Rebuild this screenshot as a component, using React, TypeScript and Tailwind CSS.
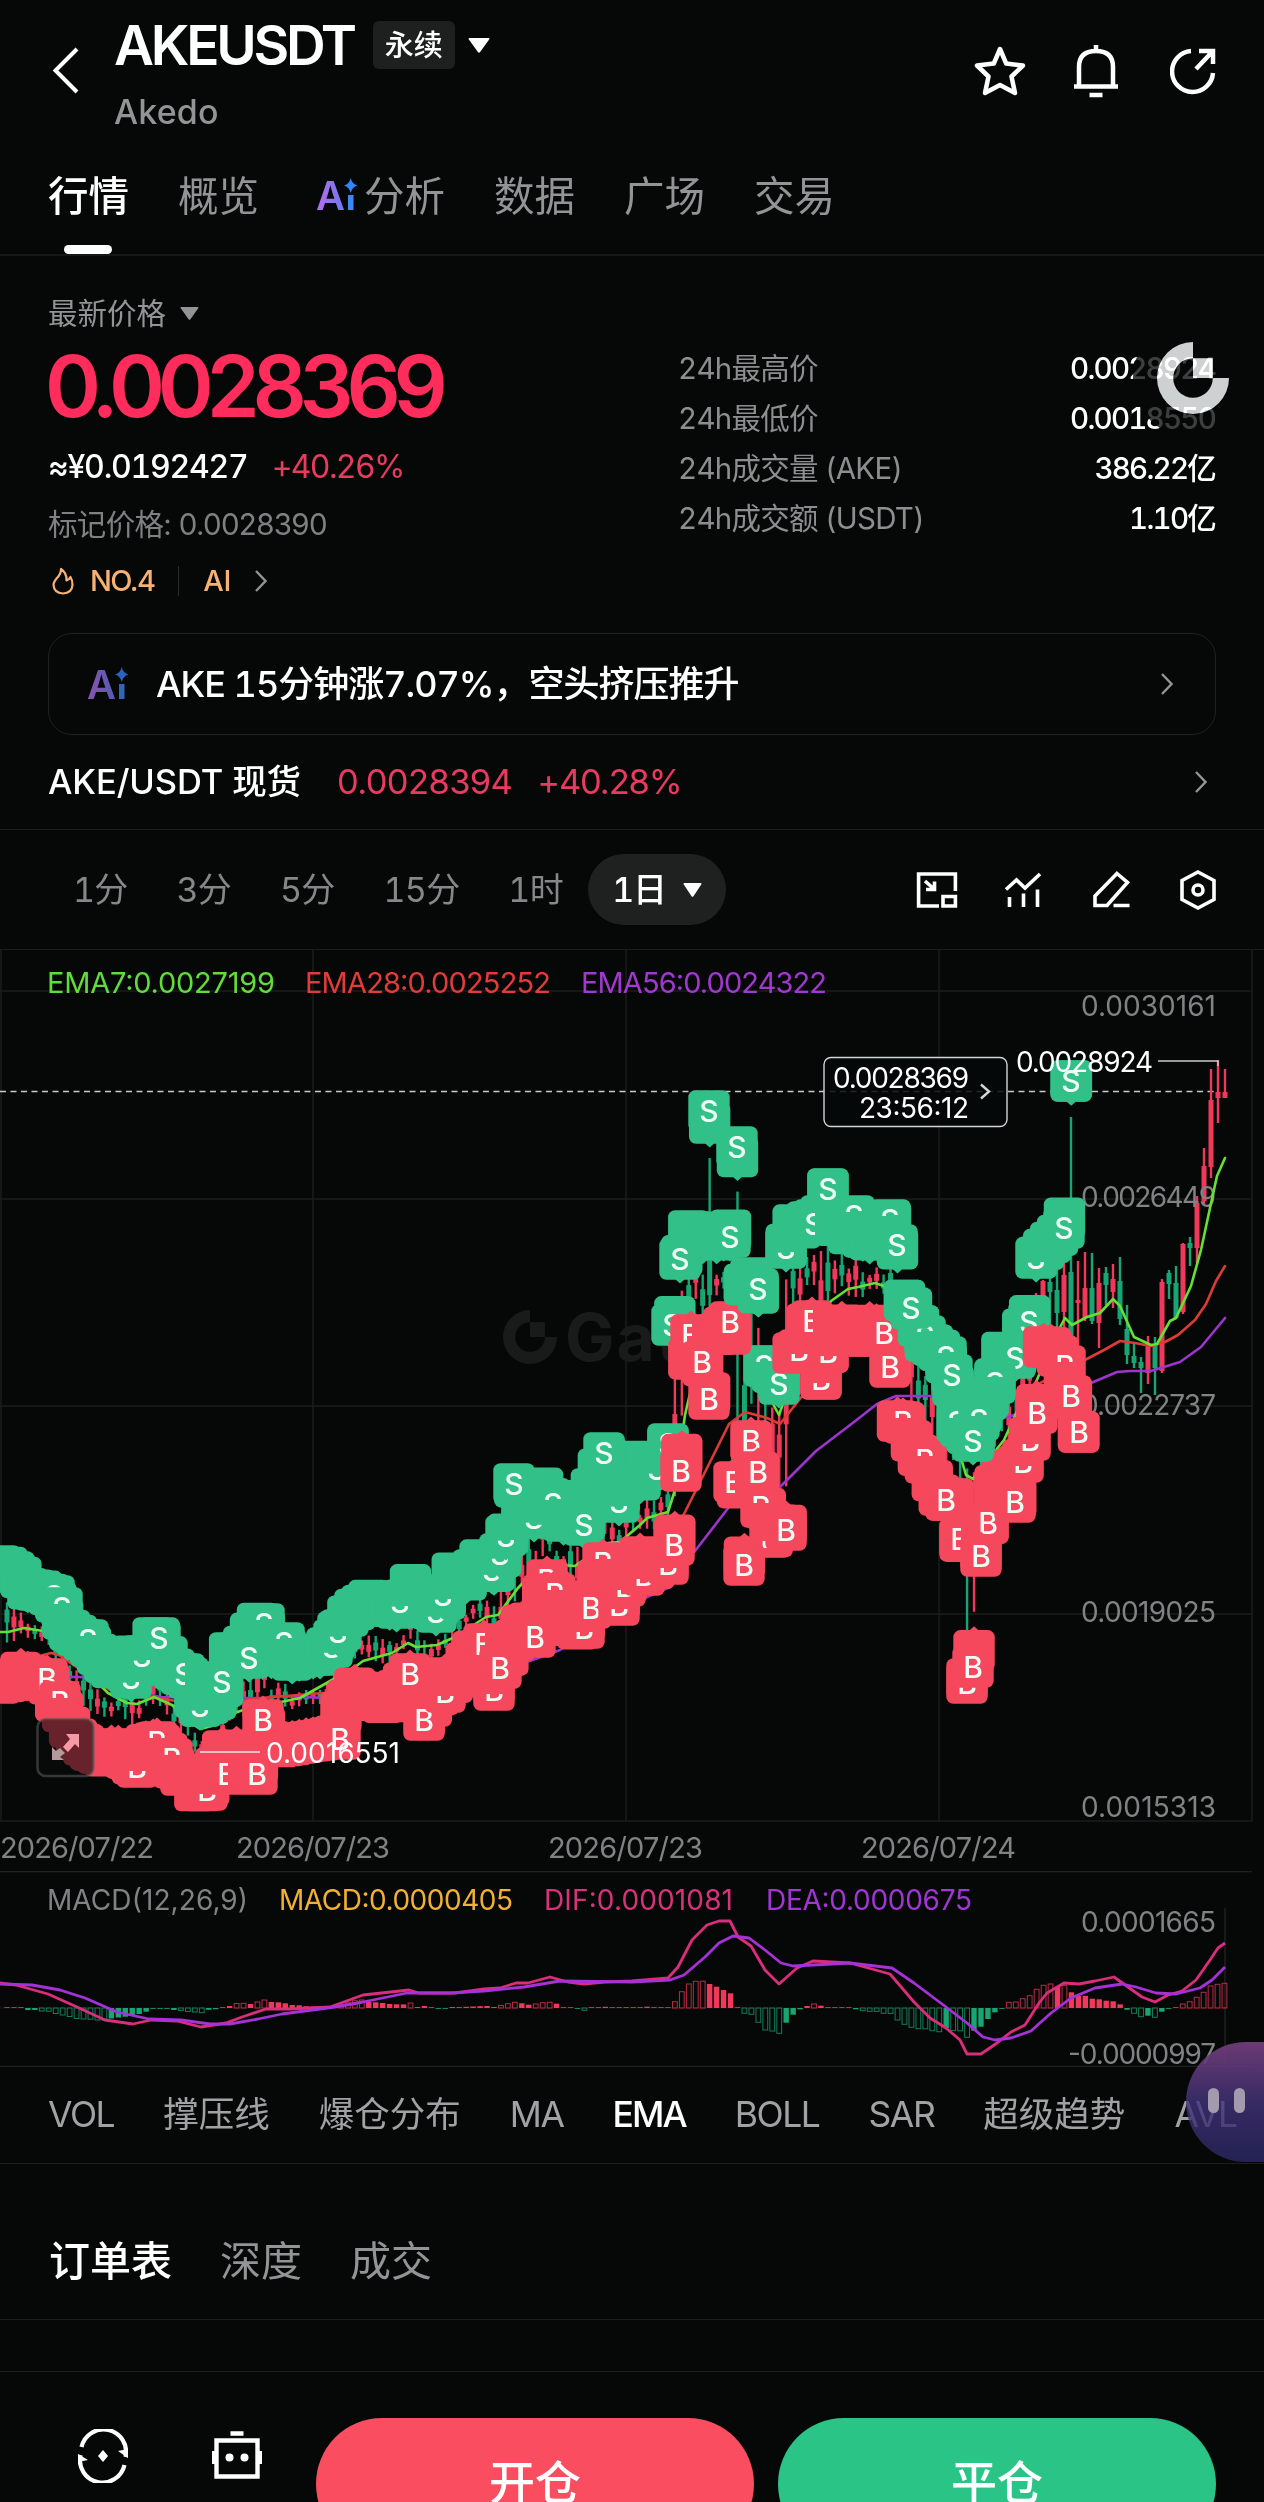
import type { ReactNode } from 'react'

type Point = [number, number]
type Side = 'S' | 'B'
// which part of a marker's letter is covered by its neighbours
type Cut = 'top' | 'bottom' | 'left' | 'right'
type Marker = [number, number, Cut?]
// x, high, body top, body bottom, low
type Candle = [number, number, number, number, number, 'up' | 'down']

const FONT = "font-['Inter','Noto_Sans_CJK_SC',sans-serif]"
const UP = '#f0385a'
const DOWN = '#17a673'
const BUY = '#f6485c'
const SELL = '#30c088'
const STEP = 6.957
const FIRST_X = 7

const TABS = ['行情', '概览', '分析', '数据', '广场', '交易']
const TIMEFRAMES = ['1分', '3分', '5分', '15分', '1时']
const INDICATORS = ['VOL', '撑压线', '爆仓分布', 'MA', 'EMA', 'BOLL', 'SAR', '超级趋势', 'AVL']

const STATS = [
  { label: '24h最高价', value: '0.0028924' },
  { label: '24h最低价', value: '0.0018550' },
  { label: '24h成交量 (AKE)', value: '386.22亿' },
  { label: '24h成交额 (USDT)', value: '1.10亿' },
]

const SELL_PATH: Point[] = [
  [5, 1566], [20, 1576], [28, 1589], [46, 1592], [55, 1600], [62, 1618], [70, 1631], [88, 1643],
  [98, 1655], [110, 1669], [120, 1658], [132, 1656], [142, 1669], [152, 1638], [159, 1638], [166, 1655],
  [175, 1671], [190, 1679], [197, 1706], [204, 1706], [215, 1700], [222, 1690], [229, 1653], [240, 1653],
  [256, 1623], [263, 1625], [270, 1656], [283, 1643], [290, 1661], [305, 1655], [320, 1655], [330, 1645],
  [340, 1632], [347, 1617], [354, 1610], [361, 1606], [371, 1599], [385, 1605], [400, 1609], [410, 1584],
  [417, 1595], [424, 1605], [431, 1609], [445, 1600], [452, 1573], [466, 1580], [473, 1570], [480, 1560],
  [495, 1572], [502, 1554], [508, 1534], [515, 1486], [521, 1515], [528, 1500], [535, 1520], [541, 1486],
  [549, 1497], [556, 1515], [563, 1523], [570, 1500], [584, 1522], [591, 1490], [604, 1453], [611, 1475],
  [618, 1500], [625, 1470], [633, 1461], [640, 1480], [650, 1458], [657, 1471], [668, 1446], [674, 1325],
  [681, 1259], [688, 1231], [695, 1231], [703, 1240], [709, 1111], [716, 1240], [723, 1237], [730, 1237],
  [737, 1147], [744, 1285], [751, 1278], [758, 1289], [765, 1366], [772, 1372], [779, 1384], [786, 1245],
  [793, 1225], [800, 1228], [807, 1222], [814, 1220], [821, 1216], [828, 1189], [835, 1226], [842, 1218],
  [849, 1234], [856, 1218], [863, 1238], [870, 1240], [877, 1232], [884, 1240], [891, 1221], [897, 1245],
  [904, 1300], [911, 1308], [918, 1325], [925, 1341], [932, 1345], [939, 1350], [946, 1362], [952, 1378],
  [959, 1425], [966, 1432], [973, 1441], [980, 1415], [987, 1400], [994, 1383], [1001, 1352], [1008, 1355],
  [1015, 1358], [1022, 1330], [1029, 1322], [1036, 1258], [1043, 1250], [1050, 1243], [1057, 1236],
  [1064, 1228], [1071, 1081],
]

const BUY_PATH: Point[] = [
  [0, 1683], [14, 1680], [20, 1672], [35, 1678], [48, 1682], [55, 1700], [62, 1710], [70, 1728],
  [75, 1738], [90, 1750], [105, 1756], [115, 1745], [125, 1758], [135, 1766], [145, 1745], [157, 1742],
  [165, 1750], [172, 1762], [178, 1780], [185, 1768], [195, 1791], [207, 1790], [215, 1770], [222, 1750],
  [230, 1760], [238, 1748], [256, 1772], [263, 1724], [270, 1740], [275, 1747], [290, 1745], [305, 1742],
  [320, 1740], [335, 1736], [341, 1712], [348, 1700], [355, 1688], [375, 1700], [388, 1704], [397, 1690],
  [410, 1676], [417, 1700], [424, 1718], [440, 1692], [446, 1676], [455, 1685], [465, 1665], [475, 1648],
  [482, 1660], [494, 1685], [501, 1668], [508, 1655], [515, 1640], [522, 1625], [528, 1622], [535, 1632],
  [542, 1596], [548, 1588], [555, 1598], [565, 1610], [570, 1625], [580, 1630], [587, 1615], [595, 1590],
  [603, 1567], [612, 1590], [620, 1600], [627, 1580], [634, 1570], [641, 1555], [650, 1574], [660, 1560],
  [668, 1560], [674, 1545], [681, 1467], [688, 1362], [695, 1335], [702, 1362], [709, 1399], [716, 1335],
  [723, 1328], [730, 1322], [737, 1482], [744, 1565], [751, 1441], [758, 1472], [765, 1507], [772, 1537],
  [779, 1525], [786, 1530], [793, 1353], [800, 1353], [807, 1324], [814, 1324], [821, 1379], [828, 1352],
  [835, 1332], [842, 1325], [849, 1335], [856, 1336], [863, 1336], [870, 1325], [877, 1328], [884, 1333],
  [891, 1367], [897, 1421], [904, 1422], [911, 1440], [918, 1455], [925, 1462], [932, 1480], [939, 1495],
  [946, 1500], [953, 1498], [960, 1539], [967, 1679], [973, 1667], [980, 1556], [988, 1523], [995, 1485],
  [1002, 1470], [1009, 1488], [1015, 1502], [1022, 1462], [1029, 1440], [1036, 1413], [1041, 1347],
  [1050, 1347], [1057, 1355], [1064, 1368], [1071, 1396], [1078, 1432],
]

const SELL_LABELS: Marker[] = [
  [54, 1596, 'bottom'], [62, 1608, 'bottom'], [88, 1640, 'bottom'], [131, 1678, 'top'], [142, 1656, 'top'],
  [159, 1638], [184, 1674, 'right'], [200, 1706, 'top'], [222, 1682], [249, 1658], [264, 1624, 'bottom'],
  [284, 1643, 'bottom'], [332, 1647, 'top'], [338, 1632, 'top'], [400, 1602, 'top'], [436, 1612, 'top'],
  [443, 1595, 'top'], [492, 1570, 'top'], [500, 1554, 'top'], [506, 1536, 'top'], [514, 1484],
  [534, 1518, 'top'], [553, 1504, 'bottom'], [619, 1502, 'top'], [604, 1453], [584, 1525], [657, 1469, 'top'],
  [668, 1444], [680, 1259], [672, 1325], [709, 1111], [737, 1147], [730, 1237],
  [751, 1278, 'bottom'], [764, 1366, 'bottom'], [779, 1384], [786, 1248, 'top'],
  [814, 1224, 'right'], [828, 1189], [854, 1216, 'bottom'], [890, 1220, 'bottom'],
  [897, 1245], [1015, 1358], [1029, 1322], [1036, 1258, 'top'], [1064, 1228],
  [1071, 1081], [986, 1400, 'top'], [995, 1383],
]

const TOP_SELL_LABELS: Marker[] = [
  [758, 1289], [925, 1336, 'bottom'], [946, 1357, 'bottom'], [911, 1308], [957, 1422, 'bottom'],
  [979, 1420, 'bottom'], [973, 1441], [952, 1375],
]

const BUY_LABELS: Marker[] = [
  [47, 1679], [60, 1702, 'bottom'], [137, 1767, 'top'], [157, 1742, 'bottom'], [207, 1790, 'top'],
  [172, 1759, 'bottom'], [227, 1774, 'right'], [257, 1774], [263, 1720], [340, 1739], [410, 1674],
  [424, 1720], [445, 1692, 'top'], [484, 1644, 'right'], [494, 1690, 'top'], [500, 1668], [535, 1637],
  [547, 1580, 'bottom'], [555, 1594, 'bottom'], [584, 1628, 'top'], [591, 1608], [603, 1563, 'bottom'],
  [619, 1605, 'top'], [625, 1586, 'top'], [644, 1575, 'top'], [668, 1564, 'top'], [674, 1545], [681, 1471],
  [691, 1335, 'right'], [730, 1322], [702, 1362], [709, 1399], [734, 1482, 'right'], [751, 1441],
  [761, 1507, 'bottom'], [758, 1472], [770, 1537, 'top'], [786, 1530], [744, 1565], [821, 1379, 'top'],
  [828, 1352, 'top'], [799, 1350, 'top'], [812, 1321, 'right'], [890, 1367],
  [884, 1333], [903, 1422, 'bottom'], [925, 1460, 'bottom'], [946, 1500], [960, 1539, 'right'],
  [967, 1683, 'top'], [973, 1667], [988, 1523], [981, 1556], [1023, 1462, 'top'], [1015, 1502],
  [1030, 1440, 'top'], [1037, 1413], [1065, 1366, 'bottom'], [1071, 1396], [1079, 1432],
]

const RECENT_CANDLES: Candle[] = [
  [1036, 1293, 1300, 1340, 1360, 'up'], [1043, 1280, 1281, 1300, 1340, 'up'], [1050, 1270, 1282, 1292, 1330, 'down'],
  [1057, 1270, 1290, 1313, 1345, 'down'], [1064, 1262, 1275, 1312, 1328, 'up'], [1071, 1117, 1272, 1345, 1370, 'down'],
  [1078, 1261, 1300, 1303, 1346, 'up'], [1085, 1252, 1288, 1318, 1321, 'up'], [1092, 1253, 1288, 1321, 1324, 'down'],
  [1099, 1268, 1283, 1323, 1348, 'up'], [1106, 1267, 1273, 1285, 1305, 'down'], [1113, 1264, 1279, 1292, 1308, 'up'],
  [1120, 1257, 1281, 1319, 1325, 'down'], [1127, 1305, 1329, 1355, 1364, 'down'], [1134, 1344, 1356, 1363, 1368, 'down'],
  [1141, 1357, 1362, 1368, 1393, 'down'], [1148, 1336, 1346, 1373, 1384, 'up'], [1155, 1337, 1344, 1368, 1395, 'down'],
  [1162, 1279, 1282, 1371, 1373, 'up'], [1169, 1270, 1273, 1284, 1299, 'down'], [1176, 1266, 1283, 1318, 1319, 'down'],
  [1183, 1243, 1244, 1312, 1314, 'up'], [1190, 1237, 1243, 1248, 1266, 'down'], [1197, 1196, 1203, 1248, 1263, 'up'],
  [1204, 1148, 1166, 1201, 1205, 'up'], [1211, 1069, 1100, 1167, 1178, 'up'], [1218, 1060, 1092, 1098, 1123, 'up'],
  [1225, 1069, 1092, 1098, 1098, 'up'],
]

const EMA7: Point[] = [
  [0, 1632], [8, 1632], [24, 1628], [43, 1631], [70, 1655], [108, 1693], [127, 1703], [137, 1704], [154, 1697],
  [172, 1705], [194, 1725], [200, 1729], [216, 1725], [229, 1715], [243, 1710], [300, 1698], [355, 1667],
  [363, 1661], [392, 1653], [408, 1643], [416, 1647], [437, 1645], [455, 1637], [486, 1617], [498, 1615],
  [518, 1588], [535, 1570], [553, 1562], [563, 1565], [575, 1566], [608, 1543], [620, 1542], [640, 1525],
  [647, 1518], [668, 1512], [674, 1493], [685, 1415], [700, 1350], [725, 1320], [748, 1339], [760, 1385],
  [772, 1402], [779, 1415], [786, 1395], [800, 1350], [831, 1301], [848, 1289], [858, 1287], [875, 1283],
  [884, 1286], [920, 1340], [945, 1404], [966, 1475], [973, 1479], [1004, 1440], [1020, 1405], [1036, 1382],
  [1057, 1333], [1065, 1318], [1072, 1325], [1087, 1317], [1100, 1313], [1113, 1299], [1120, 1306],
  [1134, 1337], [1151, 1345], [1157, 1344], [1170, 1321], [1176, 1318], [1191, 1286], [1201, 1250],
  [1210, 1208], [1217, 1176], [1225, 1158],
]

const EMA28: Point[] = [
  [0, 1672], [34, 1662], [43, 1655], [51, 1653], [59, 1655], [110, 1690], [200, 1705], [224, 1703], [261, 1698],
  [360, 1690], [470, 1655], [560, 1600], [640, 1560], [680, 1522], [700, 1482], [729, 1424], [745, 1412],
  [767, 1418], [780, 1424], [803, 1395], [850, 1350], [900, 1335], [960, 1390], [1010, 1400], [1060, 1372],
  [1083, 1361], [1104, 1350], [1120, 1341], [1135, 1343], [1151, 1346], [1165, 1342], [1178, 1335],
  [1195, 1320], [1206, 1304], [1216, 1281], [1225, 1266],
]

const EMA56: Point[] = [
  [0, 1680], [69, 1677], [82, 1677], [160, 1697], [243, 1698], [265, 1698], [278, 1696], [326, 1698],
  [450, 1690], [560, 1650], [647, 1597], [670, 1587], [695, 1551], [729, 1507], [742, 1503], [780, 1487],
  [816, 1451], [854, 1422], [877, 1404], [896, 1396], [930, 1396], [958, 1404], [985, 1420], [1009, 1417],
  [1060, 1395], [1091, 1383], [1117, 1372], [1130, 1371], [1151, 1371], [1180, 1362], [1201, 1347], [1225, 1318],
]

const MACD_BARS = [
  0.5, 0, 0, -2, -2, -3, -3.2, -5.5, -7, -8.5, -10.5, -11, -11.2, -12, -12.1, -10.5, -9.5, -8.7, -7, -6, -3.7,
  -0.5, -0.5, -0.6, -2, -2.4, -3.4, -4, -4.7, -1.8, -1.2, 0.3, 2, 4.5, 4.7, 4, 6, 8, 6, 5.7, 4.7, 3, 2.7, 1.8,
  1.5, 1.3, 1.2, 2, 3, 5.3, 7.3, 8, 6, 5.7, 5, 4, 3.7, 3.6, 5, 1, 2, 0.3, -0.3, -0.3, 1, 0.9, 1.2, 1.5, 1.8, 2,
  1, 2.6, 4.3, 5.7, 4.7, 3.3, 4, 5.3, 5.7, 4.3, 0.8, 0, -0.8, -2.3, 0, 0.6, 1.2, 0.5, 0.3, 0.3, 0.8, 0.6, 1.3,
  0.5, 0.3, 0.2, 6.3, 16.3, 24, 26.7, 26.8, 24, 21.3, 18, 14.7, 0, -5.3, -6.3, -14.3, -22, -23, -25.3, -14.7,
  -6.7, -1.3, 2, 4, 2.3, 0.7, 0.5, 0.4, 0.2, -1.3, -2.7, -3.3, -3.4, -5.3, -5.4, -12, -16.3, -19.3, -20.7,
  -20.8, -22.7, -23.7, -20.3, -22.6, -22.8, -29.3, -22.7, -18.7, -11, -4.3, -0.6, 5.7, 6, 9.3, 12.3, 18.7,
  22.7, 24, 21.3, 22.7, 15.7, 12.3, 12.2, 9.3, 8.7, 7.3, 6.7, 3.7, -1.7, -5.3, -8.7, -7.7, -9.3, -3.7, -0.5,
  0.3, 4, 6.3, 10.7, 15.7, 22, 23.7, 24.7,
]

const DIF: Point[] = [
  [0, 1983], [16, 1985], [48, 1994], [77, 2007], [105, 2020], [133, 2024], [151, 2020], [177, 2021], [201, 2027],
  [226, 2023], [242, 2017], [266, 2009], [290, 2009], [330, 2007], [363, 1995], [409, 1990], [419, 1993],
  [455, 1993], [484, 1989], [500, 1988], [516, 1983], [528, 1983], [550, 1977], [568, 1982], [584, 1984],
  [605, 1982], [632, 1981], [668, 1978], [678, 1967], [692, 1940], [707, 1925], [719, 1921], [730, 1921],
  [738, 1937], [751, 1946], [765, 1970], [779, 1984], [797, 1968], [813, 1961], [850, 1963], [890, 1974],
  [914, 2002], [930, 2018], [946, 2028], [960, 2040], [967, 2054], [981, 2054], [997, 2043], [1011, 2032],
  [1025, 2025], [1039, 2003], [1047, 1993], [1064, 1983], [1079, 1984], [1095, 1981], [1114, 1977],
  [1128, 1987], [1142, 1997], [1155, 2002], [1168, 1995], [1182, 1991], [1196, 1980], [1210, 1960],
  [1218, 1948], [1225, 1943],
]

const DEA: Point[] = [
  [0, 1984], [32, 1985], [60, 1990], [85, 1998], [117, 2012], [149, 2019], [181, 2020], [210, 2024], [230, 2024],
  [258, 2019], [282, 2014], [335, 2007], [363, 2002], [407, 1993], [451, 1993], [484, 1991], [524, 1987],
  [560, 1981], [632, 1982], [670, 1980], [684, 1975], [705, 1957], [719, 1943], [733, 1936], [749, 1938],
  [765, 1950], [781, 1963], [793, 1966], [813, 1965], [850, 1963], [892, 1968], [914, 1983], [946, 2007],
  [967, 2023], [983, 2037], [995, 2040], [1011, 2038], [1031, 2031], [1051, 2013], [1071, 1998], [1095, 1988],
  [1122, 1984], [1136, 1987], [1156, 1993], [1176, 1994], [1200, 1988], [1212, 1980], [1225, 1967],
]

function valueAt(path: Point[], x: number) {
  const i = path.findIndex((p) => p[0] >= x)
  if (i <= 0) return path[i === 0 ? 0 : path.length - 1][1]
  const [x0, y0] = path[i - 1]
  const [x1, y1] = path[i]
  return y0 + ((y1 - y0) * (x - x0)) / (x1 - x0)
}

function columns(path: Point[], from: number, to: number): Marker[] {
  const out: Marker[] = []
  for (let x = FIRST_X - STEP; x <= to; x += STEP) {
    if (x >= from) out.push([x, valueAt(path, x)])
  }
  return out
}

// Candles between the two marker bands, derived from the marker offsets
function bandCandles(): Candle[] {
  const out: Candle[] = []
  for (let i = 0; i < 148; i++) {
    const x = FIRST_X + i * STEP
    const high = valueAt(SELL_PATH, x) + 35
    const low = Math.max(high + 14, valueAt(BUY_PATH, x) - 39)
    const span = low - high
    const shift = ((i * 37) % 11) / 40
    const rising = valueAt(EMA7, x + 4) < valueAt(EMA7, x - 4)
    const odd = (i * 7) % 5 < 2
    const spike = high < 1195 || (x > 962 && x < 970)
    const dir = !spike && rising !== odd ? 'up' : 'down'
    out.push([x, high, high + span * (0.18 + shift), high + span * (0.5 + shift), low, dir])
  }
  return out
}

const toPoints = (path: Point[]) => path.map((p) => p.join(',')).join(' ')

function MarkerBox({ side, x, y }: { side: Side; x: number; y: number }) {
  const tip = side === 'S' ? 24.5 : -24.5
  const base = side === 'S' ? 20 : -20
  return (
    <g fill={side === 'S' ? SELL : BUY}>
      <rect x={x - 20.7} y={y - 20.7} width={41.4} height={41.4} rx={7} />
      <path d={`M${x - 5} ${y + base}L${x} ${y + tip}L${x + 5} ${y + base}z`} />
    </g>
  )
}

function MarkerLabel({ side, marker }: { side: Side; marker: Marker }) {
  const [x, y, cut] = marker
  return (
    <g>
      <MarkerBox side={side} x={x} y={y} />
      <text x={x} y={y + 10.5} textAnchor="middle" fontSize={30} fontWeight={500} fill="#eefbf5">
        {side}
      </text>
      {cut && (
        <rect
          x={cut === 'right' ? x + 1 : x - 11}
          y={cut === 'bottom' ? y - 4 : y - 13}
          width={cut === 'left' || cut === 'right' ? 11 : 22}
          height={cut === 'top' ? 17 : cut === 'bottom' ? 17 : 25}
          fill={side === 'S' ? SELL : BUY}
        />
      )}
    </g>
  )
}

function Markers({ side, list }: { side: Side; list: Marker[] }) {
  return (
    <>
      {list.map((m, i) => (
        <MarkerLabel key={i} side={side} marker={m} />
      ))}
    </>
  )
}

function Band({ side, from, to }: { side: Side; from: number; to: number }) {
  return (
    <>
      {columns(side === 'S' ? SELL_PATH : BUY_PATH, from, to).map(([x, y], i) => (
        <MarkerBox key={i} side={side} x={x} y={y} />
      ))}
    </>
  )
}

// SVG label centred vertically on y and fitted between x and x + width
function Label(props: { x: number; y: number; width: number; size?: number; fill?: string; children: string }) {
  const { x, y, width, size = 28, fill = '#808283', children } = props
  return (
    <text x={x} y={y + size * 0.36} fontSize={size} fill={fill} textLength={width} lengthAdjust="spacing">
      {children}
    </text>
  )
}

function GateMark({ cx, cy, r, fill }: { cx: number; cy: number; r: number; fill: string }) {
  const inner = r * 0.55
  return (
    <g fill={fill}>
      <path
        d={`M${cx} ${cy - r}A${r} ${r} 0 1 0 ${cx + r} ${cy}H${cx + inner}A${inner} ${inner} 0 1 1 ${cx} ${cy - inner}z`}
      />
      <rect x={cx} y={cy - inner} width={inner} height={inner} />
    </g>
  )
}

function PriceChart() {
  return (
    <svg className="block" width={1264} height={921} viewBox="0 950 1264 921">
      <g stroke="#1b1d1d" strokeWidth={1.5}>
        {[1, 313, 626, 939, 1252].map((x) => (
          <line key={x} x1={x} x2={x} y1={950} y2={1821} />
        ))}
        {[991, 1199, 1406, 1614, 1821].map((y) => (
          <line key={y} x1={0} x2={1252} y1={y} y2={y} />
        ))}
      </g>

      <GateMark cx={530} cy={1337} r={27} fill="#191b1b" />
      <text x={565} y={1361} fontSize={66} fontWeight={700} letterSpacing={2} fill="#191b1b">
        Gate
      </text>

      <Label x={47} y={983} width={228} size={29} fill="#62dc3a">EMA7:0.0027199</Label>
      <Label x={305} y={983} width={246} size={29} fill="#e23b3b">EMA28:0.0025252</Label>
      <Label x={581} y={983} width={246} size={29} fill="#a138cf">EMA56:0.0024322</Label>

      <line x1={0} x2={1216} y1={1091.5} y2={1091.5} stroke="#c9cbcb" strokeWidth={1.3} strokeDasharray="6 4.5" />

      <g>
        {[...bandCandles(), ...RECENT_CANDLES].map(([x, high, top, bottom, low, dir], i) => (
          <g key={i} fill={dir === 'up' ? UP : DOWN}>
            <rect x={x - 1.2} y={high} width={2.4} height={low - high} />
            <rect x={x - 2.5} y={top} width={5} height={Math.max(2, bottom - top)} />
          </g>
        ))}
      </g>

      <Label x={1081} y={1006} width={135}>0.0030161</Label>
      <Label x={1081} y={1197} width={135}>0.0026449</Label>
      <Label x={1081} y={1405} width={135}>0.0022737</Label>
      <Label x={1081} y={1612} width={135}>0.0019025</Label>
      <Label x={1081} y={1807} width={135}>0.0015313</Label>

      <g fill="none" strokeWidth={2.6} strokeLinejoin="round" strokeLinecap="round">
        <polyline points={toPoints(EMA56)} stroke="#9c35cc" />
        <polyline points={toPoints(EMA28)} stroke="#dd3b33" />
        <polyline points={toPoints(EMA7)} stroke="#66e035" />
      </g>

      <Band side="S" from={0} to={1075} />
      <Markers side="S" list={SELL_LABELS} />
      <Band side="B" from={0} to={1080} />
      <Markers side="B" list={BUY_LABELS} />
      <Band side="S" from={741} to={761} />
      <Band side="S" from={902} to={990} />
      <Markers side="S" list={TOP_SELL_LABELS} />

      <Label x={1016} y={1062} width={137} fill="#fff">0.0028924</Label>
      <path d="M1158 1061H1218V1066" fill="none" stroke="#c9cbcb" strokeWidth={1.5} />
      <path d="M200 1752H260" stroke="#e8e8e8" strokeWidth={1.5} />
      <Label x={266} y={1753} width={134} fill="#fff">0.0016551</Label>

      <rect x={824} y={1057.5} width={183} height={69} rx={7} fill="#060808" fillOpacity={0.85} stroke="#d4d6d6" strokeWidth={1.4} />
      <Label x={833} y={1078} width={136} fill="#fff">0.0028369</Label>
      <Label x={859} y={1108} width={110} fill="#fff">23:56:12</Label>
      <path d="M981 1084.500L989 1091.500L981 1098.500" fill="none" stroke="#d4d6d6" strokeWidth={2.4} />

      <rect x={37.500} y={1719} width={56} height={57} rx={8} fill="#0a0a0a" fillOpacity={0.6} stroke="#565858" strokeOpacity={0.6} strokeWidth={2.5} />
      <g fill="#f59aa5">
        <path d="M66 1734H79V1748L75 1744L68 1752L63 1747L70 1739z" />
        <path d="M52 1760V1747L56 1751L60 1748L65 1753L60 1757L64 1760z" fill="#b39a9c" />
      </g>

      <Label x={0} y={1847.500} width={154} size={29}>2026/07/22</Label>
      <Label x={236} y={1847.500} width={154} size={29}>2026/07/23</Label>
      <Label x={548} y={1847.500} width={155} size={29}>2026/07/23</Label>
      <Label x={861} y={1847.500} width={155} size={29}>2026/07/24</Label>
    </svg>
  )
}

function MacdChart() {
  return (
    <svg className="block" width={1264} height={196} viewBox="0 1871 1264 196">
      <path d="M0 1871.500H1252M0 2066.500H1252M1225 1908V2066" stroke="#1f2121" strokeWidth={1.5} />
      <Label x={47} y={1900} width={201} size={28}>MACD(12,26,9)</Label>
      <Label x={279} y={1900} width={234} size={28} fill="#f2b134">MACD:0.0000405</Label>
      <Label x={544} y={1900} width={189} size={28} fill="#d8327a">DIF:0.0001081</Label>
      <Label x={766} y={1900} width={206} size={28} fill="#a136d4">DEA:0.0000675</Label>
      <Label x={1081} y={1922} width={135}>0.0001665</Label>
      <Label x={1068} y={2054} width={148}>-0.0000997</Label>

      <line x1={0} x2={1225} y1={2008} y2={2008} stroke="#7a1f33" strokeOpacity={0.3} />
      {MACD_BARS.map((v, i) => {
        const x = FIRST_X + i * STEP
        const growing = Math.abs(v) > Math.abs(MACD_BARS[i - 1] ?? 0) && Math.abs(v) > 2.2
        const color = v >= 0 ? UP : DOWN
        const h = Math.max(0.8, Math.abs(v))
        const y = v >= 0 ? 2008 - h : 2008
        return growing ? (
          <rect key={i} x={x - 2.4} y={y} width={4.8} height={h} fill="none" stroke={color} strokeOpacity={0.75} />
        ) : (
          <rect key={i} x={x - 2.7} y={y} width={5.4} height={h} fill={color} />
        )
      })}
      <g fill="none" strokeWidth={2.8} strokeLinejoin="round">
        <polyline points={toPoints(DIF)} stroke="#dc2c7c" />
        <polyline points={toPoints(DEA)} stroke="#a531d8" />
      </g>
    </svg>
  )
}

function AiLogo({ id, className }: { id: string; className?: string }) {
  return (
    <svg className={className} width={41} height={34} viewBox="0 0 41 34" overflow="visible">
      <defs>
        <linearGradient id={id} x1="0" y1="0" x2="41" y2="0" gradientUnits="userSpaceOnUse">
          <stop offset="0" stopColor="#b46ee8" />
          <stop offset="0.7" stopColor="#6a78f0" />
          <stop offset="1" stopColor="#2f86ff" />
        </linearGradient>
      </defs>
      <text x={-1} y={32} fontSize={40} fontWeight={600} fill={`url(#${id})`} textLength={29} lengthAdjust="spacingAndGlyphs">
        A
      </text>
      <rect x={31} y={17} width={5.500} height={15} fill="#3f86f5" />
      <path d="M33.700 0Q35 6 40.500 7.500Q35 9 33.700 15Q32.400 9 27 7.500Q32.400 6 33.700 0z" fill="#3186fb" />
    </svg>
  )
}

function Chevron({ className }: { className?: string }) {
  return (
    <svg className={className} width={12} height={22} viewBox="0 0 12 22" fill="none" stroke="currentColor" strokeWidth={2.400}>
      <path d="M1 1L10.500 11L1 21" />
    </svg>
  )
}

function Caret({ width, height }: { width: number; height: number }) {
  return (
    <svg width={width} height={height} viewBox="0 0 20 13" preserveAspectRatio="none" fill="currentColor">
      <path d="M1.500 0H18.500Q20 0 19.200 1.300L11 12.200Q10 13.300 9 12.200L0.800 1.300Q0 0 1.500 0z" />
    </svg>
  )
}

function ToolIcon({ children }: { children: ReactNode }) {
  return (
    <svg width={42} height={42} viewBox="0 0 42 42" fill="none" stroke="#fff" strokeWidth={3.600}>
      {children}
    </svg>
  )
}

function Header() {
  return (
    <header className="flex h-[150px] pl-[52px] pr-[48px]">
      <svg className="mt-[47px]" width={27} height={47} viewBox="0 0 27 47" fill="none" stroke="#fff" strokeWidth={4}>
        <path d="M25 2L3.500 23.500L25 45" />
      </svg>
      <div className="ml-[35px] flex flex-col pt-[14px]">
        <div className="flex h-[62px] items-center">
          <h1 className="text-[55px] leading-[60px] font-semibold tracking-[-0.059em] text-white">AKEUSDT</h1>
          <span className="ml-[19px] flex h-12 w-[82px] items-center justify-center rounded-md bg-[#1e2020] text-[29px] leading-none font-medium text-white">
            永续
          </span>
          <span className="ml-[13px] text-white">
            <Caret width={22} height={15} />
          </span>
        </div>
        <p className="mt-[15px] text-[34px] leading-[42px] font-medium tracking-[0.005em] text-[#929495]">Akedo</p>
      </div>
      <div className="mt-[44px] ml-auto flex h-[54px] items-center text-white">
        <svg width={52} height={52} viewBox="0 0 52 52" fill="none" stroke="currentColor" strokeWidth={4.500} strokeLinejoin="round">
          <path d="M26 4L32.200 18.500L49 20.500L37.500 31.500L41 48L26 40L11 48L14.500 31.500L3 20.500L19.800 18.500z" />
        </svg>
        <svg className="mr-[48px] ml-[44px]" width={52} height={54} viewBox="0 0 52 54" fill="none" stroke="currentColor" strokeWidth={4.500}>
          <path d="M26 1V8M9 42V23Q9 7 26 7T43 23V42M4 42.500H48M19.500 51H32.500" />
        </svg>
        <svg width={46} height={50} viewBox="0 0 46 50" fill="none" stroke="currentColor" strokeWidth={4.500}>
          <path d="M21 5A20.500 20.500 0 1 0 43 27M29 5H43V18M42.500 5.500L26 23" />
        </svg>
      </div>
    </header>
  )
}

function PageTabs() {
  return (
    <nav className="flex h-[106px] gap-[49px] border-b-2 border-[#151717] pl-[48px] text-[40.500px] leading-[94px] text-[#929495]">
      {TABS.map((tab, i) => (
        <div key={tab} className={i === 0 ? 'relative font-medium text-white' : 'flex items-center'}>
          {tab === '分析' && <AiLogo id="tab-ai" className="mr-[6px] mb-[15px] ml-[9px]" />}
          <span className="block h-full">{tab}</span>
          {i === 0 && <span className="absolute bottom-0 left-4 h-[9px] w-12 rounded-full bg-white" />}
        </div>
      ))}
    </nav>
  )
}

function Ticker() {
  return (
    <section className="relative flex h-[377px] justify-between px-[48px] pt-[34px]">
      <div>
        <div className="flex h-[46px] items-center gap-[14px] text-[29.500px] leading-[44px] text-[#929495]">
          最新价格
          <Caret width={19} height={13} />
        </div>
        <div className="-ml-[3px] h-[104px] text-[85px] leading-[102px] font-semibold tracking-[-0.085em] text-[#ff2c5c]">0.0028369</div>
        <div className="flex h-[54px] items-center gap-6 text-[32px]">
          <span className="font-medium tracking-[-0.038em] text-white tabular-nums">≈¥0.0192427</span>
          <span className="tracking-[-0.052em] text-[#e93a60] tabular-nums">+40.26%</span>
        </div>
        <div className="h-[60px] text-[29.500px] leading-[60px] tracking-[-0.023em] text-[#7e8081]">标记价格: 0.0028390</div>
        <div className="flex h-[54px] items-center text-[29px] font-medium text-[#f7b173]">
          <svg className="ml-1" width={22} height={28} viewBox="0 0 22 28" fill="none" stroke="currentColor" strokeWidth={2.200} strokeLinejoin="round">
            <path d="M9 2Q9 7 5 11Q1.500 15 1.500 18Q2 26 11 26.500Q20 26 20.500 18Q20.500 13 18.500 10Q17 13 14.500 13.500Q15 6 9 2z" />
          </svg>
          <span className="ml-4 tracking-[-0.055em]">NO.4</span>
          <span className="ml-[24px] h-[30px] w-px bg-[#2a2c2c]" />
          <span className="ml-[24px] tracking-[-0.01em]">AI</span>
          <Chevron className="ml-[24px] text-[#929495]" />
        </div>
      </div>
      <dl className="flex w-[538px] flex-col pt-[53px] text-[29.500px] tabular-nums">
        {STATS.map((s) => (
          <div key={s.label} className="flex h-[50px] items-center justify-between leading-[50px] tracking-[-0.025em]">
            <dt className="text-[#8c8e8f]">{s.label}</dt>
            <dd className="pr-[1px] font-medium tracking-[-0.06em] text-white">{s.value}</dd>
          </div>
        ))}
      </dl>
      {/* floating brand button over the stats */}
      <svg className="absolute top-[58px] left-[1129px]" width={128} height={128} viewBox="0 0 128 128">
        <circle cx={64} cy={64} r={60} fill="#060808" fillOpacity={0.78} />
      </svg>
      <svg className="absolute top-[58px] left-[1129px] mix-blend-plus-lighter" width={128} height={128} viewBox="0 0 128 128">
        <GateMark cx={64} cy={64} r={36} fill="#c8caca" />
      </svg>
    </section>
  )
}

function Timeframes() {
  return (
    <div className="flex h-[120px] items-center border-b border-[#1c1e1e] pr-[45px] pl-[73px] text-[34px] text-[#858788]">
      <div className="flex w-[490px] justify-between tracking-[-0.02em] tabular-nums">
        {TIMEFRAMES.map((t) => (
          <span key={t}>{t}</span>
        ))}
      </div>
      <div className="ml-[25px] flex h-[71px] w-[138px] items-center justify-center gap-[17px] rounded-full bg-[#1f2121] font-medium text-white tabular-nums">
        <span className="tracking-[-0.04em] whitespace-nowrap">1日</span>
        <Caret width={19} height={14} />
      </div>
      <div className="ml-auto flex items-center gap-[45px]">
        <ToolIcon>
          <path d="M23 37H2.600V5H39.400V22M27 27.500H39.400V37H27zM9 12L18 20M18.500 12.500V20.500H10" />
        </ToolIcon>
        <ToolIcon>
          <path d="M3 20.500L13.500 11L22 19L37 5M6.500 28V38M20.500 24.500V38M34.500 20.500V38" />
        </ToolIcon>
        <ToolIcon>
          <path d="M27 4.500L37.500 13.500L17 36.500H5V27zM23.500 36.500H39.500" />
        </ToolIcon>
        <ToolIcon>
          <path d="M21 3L37 11.500V30.500L21 39L5 30.500V11.500z" />
          <circle cx={21} cy={21} r={5} />
        </ToolIcon>
      </div>
    </div>
  )
}

function IndicatorTabs() {
  return (
    <div className="flex h-[97px] items-center gap-[49px] overflow-hidden border-b border-[#1c1e1e] pl-[48px] text-[35.500px] whitespace-nowrap text-[#a0a2a3]">
      {INDICATORS.map((name) => {
        if (name === 'EMA') return <span key={name} className="font-medium tracking-[-0.055em] text-white">{name}</span>
        return (
          <span key={name} className={/[A-Z]/.test(name) ? 'tracking-[-0.04em]' : ''}>
            {name}
          </span>
        )
      })}
    </div>
  )
}

function BottomBar() {
  return (
    <footer className="flex h-[131px] items-start border-t border-[#1c1e1e] pr-[48px] pl-[78px]">
      <svg className="mt-[57px]" width={50} height={54} viewBox="0 0 50 54" fill="none" stroke="#fff" strokeWidth={4.200}>
        <path d="M3.500 18A22.500 22.500 0 0 1 47.500 28M46.500 36A22.500 22.500 0 0 1 2.500 26" />
        <path d="M40 22L50 29V20zM10 31L0 25V33z" fill="#fff" stroke="none" />
        <path d="M25 21L30 27L25 33L20 27z" fill="#fff" stroke="none" />
      </svg>
      <svg className="mt-[58px] ml-[84px]" width={50} height={50} viewBox="0 0 50 50" fill="none" stroke="#fff" strokeWidth={4.400}>
        <path d="M4.500 10.500H45.500V46.500H4.500zM18.500 3.500H31.500M2 21V34M48 21V34" />
        <circle cx={17.500} cy={27.500} r={4} fill="#fff" stroke="none" />
        <circle cx={32.500} cy={27.500} r={4} fill="#fff" stroke="none" />
      </svg>
      <div className="mt-[46px] ml-[54px] flex flex-1 gap-6">
        <button className="h-[132px] flex-1 rounded-full bg-[#fa4d5f] pb-[3px] text-[46px] font-medium text-white">开仓</button>
        <button className="h-[132px] flex-1 rounded-full bg-[#2bc487] pb-[3px] text-[46px] font-medium text-white">平仓</button>
      </div>
    </footer>
  )
}

export default function App() {
  return (
    <main className={`${FONT} relative h-[2502px] w-[1264px] overflow-hidden bg-[#060808]`}>
      <Header />
      <PageTabs />
      <Ticker />

      <div className="mx-[48px] flex h-[102px] items-center rounded-[24px] border border-[#1f2121] px-[39px]">
        <AiLogo id="news-ai" className="opacity-75" />
        <p className="ml-[27px] text-[36px] font-medium tracking-[-0.028em] text-white tabular-nums">
          AKE 15分钟涨7.07%，空头挤压推升
        </p>
        <Chevron className="mr-[3px] ml-auto text-[#929495]" />
      </div>

      <div className="flex h-[95px] items-center border-b border-[#1c1e1e] px-[48px] text-[34.500px]">
        <span className="font-medium tracking-[-0.003em] text-white">AKE/USDT 现货</span>
        <span className="ml-[36px] tracking-[-0.018em] text-[#e93a60]">0.0028394</span>
        <span className="ml-[25px] tracking-[-0.033em] text-[#e93a60]">+40.28%</span>
        <Chevron className="mr-[9px] ml-auto text-[#929495]" />
      </div>

      <Timeframes />
      <PriceChart />
      <MacdChart />
      <IndicatorTabs />

      <div className="flex h-[156px] items-center gap-[48px] border-b border-[#1c1e1e] pt-[39px] pl-[49px] text-[41px] leading-[116px] text-[#929495]">
        <span className="font-medium text-white">订单表</span>
        <span>深度</span>
        <span>成交</span>
      </div>
      <div className="h-[51px]" />
      <BottomBar />

      <div className="absolute top-[2042px] left-[1186px] flex h-[120px] w-[140px] gap-[15px] rounded-l-full bg-linear-to-b from-[#713c79]/95 via-[#43337a]/80 to-[#292660]/85 pt-[46px] pl-[22px]">
        <span className="h-[25px] w-[11px] rounded-full bg-[#a49aae]" />
        <span className="h-[25px] w-[11px] rounded-full bg-[#a49aae]" />
      </div>
    </main>
  )
}
